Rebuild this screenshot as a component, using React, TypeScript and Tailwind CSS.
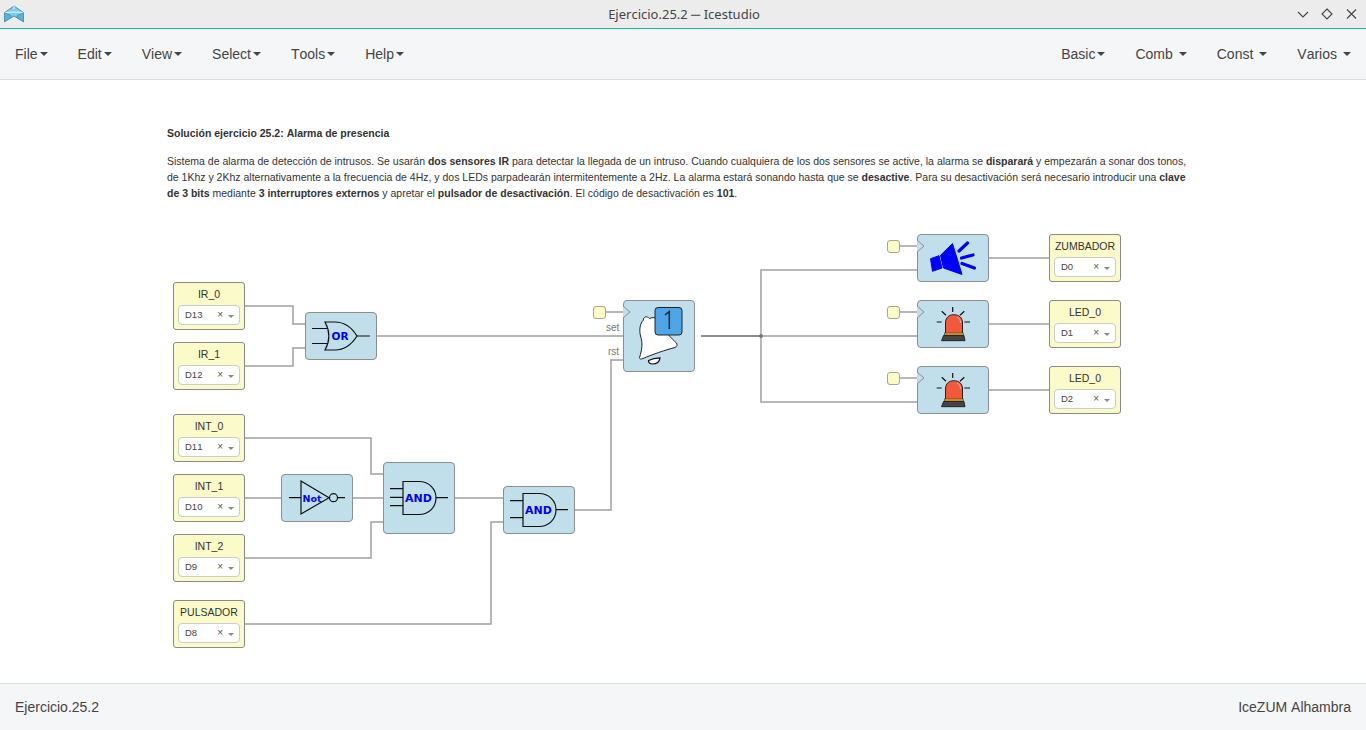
import React from 'react';

type Pin = { label: string; value: string; x: number; y: number };

const CANVAS_TOP = 80;

const pins: Pin[] = [
  { label: 'IR_0', value: 'D13', x: 173, y: 282 },
  { label: 'IR_1', value: 'D12', x: 173, y: 342 },
  { label: 'INT_0', value: 'D11', x: 173, y: 414 },
  { label: 'INT_1', value: 'D10', x: 173, y: 474 },
  { label: 'INT_2', value: 'D9', x: 173, y: 534 },
  { label: 'PULSADOR', value: 'D8', x: 173, y: 600 },
  { label: 'ZUMBADOR', value: 'D0', x: 1049, y: 234 },
  { label: 'LED_0', value: 'D1', x: 1049, y: 300 },
  { label: 'LED_0', value: 'D2', x: 1049, y: 366 },
];

const wires = [
  'M245 306H293V324H305',
  'M245 366H293V348H305',
  'M377 336H623',
  'M245 438H371V474H383',
  'M245 498H281',
  'M353 498H383',
  'M245 558H371V522H383',
  'M455 498H503',
  'M245 624H491V522H503',
  'M575 510H611V360H623',
  'M761 336V270H917',
  'M761 336H917',
  'M761 336V402H917',
  'M989 258H1049',
  'M989 324H1049',
  'M989 390H1049',
  'M899 246H917',
  'M899 312H917',
  'M899 378H917',
  'M605 312H623',
];

const clocks = [
  { x: 593, y: 306 },
  { x: 887, y: 240 },
  { x: 887, y: 306 },
  { x: 887, y: 372 },
];

function Caret({ className }: { className: string }) {
  return <span className={`inline-block w-0 h-0 border-x-4 border-x-transparent border-t-4 border-t-[#444] ${className}`} />;
}

function MenuItem({ label, spaced }: { label: string; spaced?: boolean }) {
  return (
    <div className="flex items-center px-[15px] text-sm text-[#444]">
      {label}
      <Caret className={spaced ? 'ml-[6px]' : 'ml-[2px]'} />
    </div>
  );
}

function PinBlock({ pin }: { pin: Pin }) {
  return (
    <div
      className="absolute w-[72px] h-[48px] bg-[#fbfbc9] border border-[#8a8a8a] rounded-[3px] flex flex-col items-center"
      style={{ left: pin.x, top: pin.y - CANVAS_TOP }}
    >
      <div className="h-[22px] leading-[23px] text-[10.5px] text-[#333] whitespace-nowrap">{pin.label}</div>
      <div className="w-[62px] h-[20px] bg-white border border-[#ccc] rounded-[4px] flex items-center pl-[6px] text-[9.5px] text-[#444]">
        <span className="flex-1">{pin.value}</span>
        <span className="text-[10px] leading-none text-[#555] mr-[5px]">×</span>
        <span className="inline-block w-0 h-0 mt-[2px] border-x-[3px] border-x-transparent border-t-[3px] border-t-[#888] mr-[5px]" />
      </div>
    </div>
  );
}

function Block({ x, y, w, h, children }: { x: number; y: number; w: number; h: number; children: React.ReactNode }) {
  return (
    <div
      className="absolute bg-[#c0dfeb] border border-[#8a8f92] rounded-[4px]"
      style={{ left: x, top: y - CANVAS_TOP, width: w, height: h }}
    >
      <svg className="absolute -left-px -top-px" width={w} height={h} viewBox={`${x} ${y} ${w} ${h}`} fill="none">
        {children}
      </svg>
    </div>
  );
}

function GateLabel({ x, y, size, children }: { x: number; y: number; size: number; children: string }) {
  return (
    <text x={x} y={y} textAnchor="middle" fontSize={size} fontWeight="700" fill="#0000ff" fontFamily="'DejaVu Sans', sans-serif">
      {children}
    </text>
  );
}

function ClockMark({ x, y }: { x: number; y: number }) {
  return <path d={`M${x} ${y + 6}L${x + 7} ${y + 12}L${x} ${y + 18}`} stroke="#8a8f92" strokeWidth="1" fill="#c0dfeb" />;
}

function Siren() {
  return (
    <g>
      <path d="M952.700 307V312M941.700 311.300L946 315.300M964.300 311.300L960 315.300M936.700 322H941.700M964.300 322H970" stroke="#111" strokeWidth="1.200" />
      <path d="M945.500 333.500V323C945.500 317.500 949 314.700 953.800 314.700C959 314.700 962.500 317.500 962.500 323V333.500Z" fill="#f4583a" stroke="#222" strokeWidth="1" />
      <path d="M957 317C959.500 318 960.500 320 960.500 323" stroke="#f9b3a0" strokeWidth="1" />
      <rect x="944.500" y="333" width="19" height="2" fill="#f2b51d" stroke="#222" strokeWidth="0.500" />
      <path d="M943.500 335.500H964L965 340.700H941.500Z" fill="#444" stroke="#111" strokeWidth="0.800" />
    </g>
  );
}

function LogoIcon() {
  return (
    <svg width="20" height="18" viewBox="0 0 20 18" className="ml-[4px]">
      <path d="M0.500 7.700L10 1L19.500 7.700V16.700L10 11L0.500 16.700Z" fill="#7ccdee" stroke="#4d8fb0" strokeWidth="1" />
      <path d="M0.500 7.700L10 7M19.500 7.700L10 7M10 1V4" stroke="#d6f0fa" strokeWidth="1.200" fill="none" />
      <path d="M0.500 16.700L7 12.500V10.500L0.500 7.700ZM19.500 16.700L13 12.500V10.500L19.500 7.700Z" fill="#57b3dc" stroke="#4d8fb0" strokeWidth="0.800" />
    </svg>
  );
}

export default function App() {
  return (
    <div className="w-[1366px] h-[730px] flex flex-col overflow-hidden bg-white font-['Liberation_Sans',sans-serif] [font-kerning:none]">
      {/* Window title */}
      <div className="h-[29px] shrink-0 flex items-center relative bg-[#ececec] border-b border-[#1abc9c]">
        <LogoIcon />
        <div className="flex-1 text-center text-[13px] text-[#444] font-['Noto_Sans',sans-serif] pt-[1px] pr-[26px] pl-[4px]">Ejercicio.25.2 ─ Icestudio</div>
        <div className="absolute right-[8px] top-[8px] flex gap-[10px]">
          <svg width="14" height="12" viewBox="0 0 14 12" fill="none" stroke="#444" strokeWidth="1.100"><path d="M2 4L7 9L12 4" /></svg>
          <svg width="14" height="12" viewBox="0 0 14 12" fill="none" stroke="#444" strokeWidth="1.100"><path d="M7 1L12 6L7 11L2 6Z" /></svg>
          <svg width="14" height="12" viewBox="0 0 14 12" fill="none" stroke="#444" strokeWidth="1.100"><path d="M3 1.500L12 10.500M12 1.500L3 10.500" /></svg>
        </div>
      </div>

      {/* Menu */}
      <div className="h-[51px] shrink-0 flex justify-between bg-[#f5f6f8] border-b border-[#ddd]">
        <div className="flex">
          <MenuItem label="File" />
          <MenuItem label="Edit" />
          <MenuItem label="View" />
          <MenuItem label="Select" />
          <MenuItem label="Tools" />
          <MenuItem label="Help" />
        </div>
        <div className="flex">
          <MenuItem label="Basic" />
          <MenuItem label="Comb" spaced />
          <MenuItem label="Const" spaced />
          <MenuItem label="Varios" spaced />
        </div>
      </div>

      {/* Circuit canvas */}
      <div className="flex-1 relative bg-white">
        <div className="absolute left-[167px] top-[45px] w-[1040px] text-[10.5px] leading-[16px] text-[#333] whitespace-nowrap">
          <p className="font-bold h-[28px]">Solución ejercicio 25.2: Alarma de presencia</p>
          <p>
            Sistema de alarma de detección de intrusos. Se usarán <b>dos sensores IR</b> para detectar la llegada de un intruso. Cuando cualquiera de los dos sensores se active, la alarma se <b>disparará</b> y empezarán a sonar dos tonos,
            <br />
            de 1Khz y 2Khz alternativamente a la frecuencia de 4Hz, y dos LEDs parpadearán intermitentemente a 2Hz. La alarma estará sonando hasta que se <b>desactive</b>. Para su desactivación será necesario introducir una <b>clave</b>
            <br />
            <b>de 3 bits</b> mediante <b>3 interruptores externos</b> y apretar el <b>pulsador de desactivación</b>. El código de desactivación es <b>101</b>.
          </p>
        </div>

        <svg className="absolute left-0 -top-[80px]" width="1366" height="730" fill="none">
          {wires.map((d) => (
            <path key={d} d={d} stroke="#a0a0a0" strokeWidth="1.500" />
          ))}
          <path d="M701 336H761" stroke="#666" strokeWidth="1.500" />
          <circle cx="761" cy="336" r="2" fill="#777" />
        </svg>

        {clocks.map((c) => (
          <div
            key={`${c.x}-${c.y}`}
            className="absolute w-[13px] h-[13px] bg-[#fbfbc9] border border-[#a8a88c] rounded-[3px]"
            style={{ left: c.x, top: c.y - CANVAS_TOP }}
          />
        ))}

        <div className="absolute left-[606px] top-[242px] text-[10px] leading-[12px] text-[#777]">set</div>
        <div className="absolute left-[608px] top-[266px] text-[10px] leading-[12px] text-[#777]">rst</div>

        {pins.map((p) => (
          <PinBlock key={p.value} pin={p} />
        ))}

        {/* OR */}
        <Block x={305} y={312} w={72} h={48}>
          <path d="M312 328.500H328M312 343.500H328M357 336H370" stroke="#111" strokeWidth="1.200" />
          <path d="M325 322H335C345 322 352 328 357 336C352 344 345 350 335 350H325C330 341 330 331 325 322Z" stroke="#111" strokeWidth="1.200" />
          <GateLabel x={340} y={340} size={10.500}>OR</GateLabel>
        </Block>

        {/* NOT */}
        <Block x={281} y={474} w={72} h={48}>
          <path d="M289 497.700H301M338 497.700H345" stroke="#111" strokeWidth="1.200" />
          <path d="M301 481L329 497.700L301 514Z" stroke="#111" strokeWidth="1.200" />
          <circle cx="333.500" cy="497.700" r="4" stroke="#111" strokeWidth="1.200" />
          <GateLabel x={312} y={501.500} size={9.500}>Not</GateLabel>
        </Block>

        {/* AND 3 inputs */}
        <Block x={383} y={462} w={72} h={72}>
          <path d="M390 488.700H403M390 497.300H403M390 505.700H403M436 497.700H448" stroke="#111" strokeWidth="1.200" />
          <path d="M403 481.500H419C429 481.500 436 489 436 497.700C436 507 429 514.500 419 514.500H403Z" stroke="#111" strokeWidth="1.200" />
          <GateLabel x={418.500} y={501.500} size={11}>AND</GateLabel>
        </Block>

        {/* AND 2 inputs */}
        <Block x={503} y={486} w={72} h={48}>
          <path d="M510 500.700H523M510 517.700H523M556 509.700H568" stroke="#111" strokeWidth="1.200" />
          <path d="M523 493.500H539C549 493.500 556 501 556 509.700C556 519 549 526.500 539 526.500H523Z" stroke="#111" strokeWidth="1.200" />
          <GateLabel x={538.500} y={513.500} size={11}>AND</GateLabel>
        </Block>

        {/* Alarm bell */}
        <Block x={623} y={300} w={72} h={72}>
          <ClockMark x={623} y={300} />
          <path d="M639.500 357.500C642 350 643 343 640.500 336C639 330 640 323 643.500 320C643 317 647 315.500 649.500 318.500C655 316 661 319 664 326C666 333 671 338 676.500 343C677.500 345 677 346.500 675 347.500C665 350 651 355 643 358.500C640.500 359.500 639.500 359 639.500 357.500Z" fill="#fff" stroke="#222" strokeWidth="1" />
          <path d="M648.500 360.500C651 359.300 656 358 660 357.800C659.500 361.500 656.500 364 652.500 364C650 364 648.500 362.500 648.500 360.500Z" fill="#fff" stroke="#111" strokeWidth="1.200" />
          <rect x="655" y="307.500" width="27" height="27.500" rx="3" fill="#4ea5e8" stroke="#222" strokeWidth="1" />
          <path d="M665 315L669.300 311.500V329" stroke="#222" strokeWidth="1.500" />
        </Block>

        {/* Buzzer */}
        <Block x={917} y={234} w={72} h={48}>
          <ClockMark x={917} y={234} />
          <path d="M930.500 258.700L939 255.700L942 268L932.500 271.300Z" fill="#0000ff" stroke="#0000ff" strokeWidth="1" strokeLinejoin="round" />
          <path d="M940.500 255.300L952.500 243.500L962 274.500L943.500 268Z" fill="#0000ff" stroke="#0000ff" strokeWidth="1" strokeLinejoin="round" />
          <path d="M959 251L967.500 243M961.500 258L973 255M962 263.500L974.500 268" stroke="#0000ff" strokeWidth="3.200" strokeLinecap="round" />
        </Block>

        {/* LEDs */}
        <Block x={917} y={300} w={72} h={48}>
          <ClockMark x={917} y={300} />
          <Siren />
        </Block>
        <Block x={917} y={366} w={72} h={48}>
          <ClockMark x={917} y={366} />
          <g transform="translate(0 66)">
            <Siren />
          </g>
        </Block>
      </div>

      {/* Footer */}
      <div className="h-[47px] shrink-0 flex items-center justify-between px-[15px] bg-[#f5f6f8] border-t border-[#ddd] text-sm text-[#444]">
        <span>Ejercicio.25.2</span>
        <span>IceZUM Alhambra</span>
      </div>
    </div>
  );
}
